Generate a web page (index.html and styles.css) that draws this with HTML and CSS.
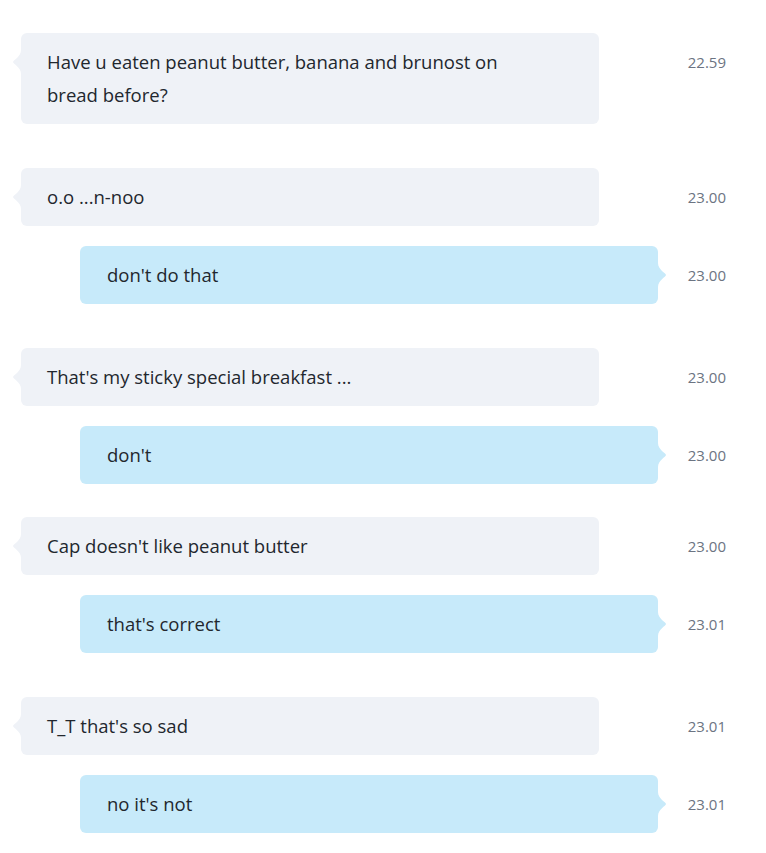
FILE: index.html
```html
<!DOCTYPE html>
<html lang="en">
<head>
    <meta charset="UTF-8">
    <meta name="viewport" content="width=device-width, initial-scale=1.0">
    <title>Chat</title>
    <link rel="stylesheet" href="styles.css">
</head>
<body>
    <div class="chat">
        <div class="row in">
            <div class="bubble">Have u eaten peanut butter, banana and brunost on<br>bread before?</div>
            <div class="time">22.59</div>
        </div>

        <div class="row in gap-big">
            <div class="bubble">o.o ...n-noo</div>
            <div class="time">23.00</div>
        </div>
        <div class="row out">
            <div class="bubble">don't do that</div>
            <div class="time">23.00</div>
        </div>

        <div class="row in gap-big">
            <div class="bubble">That's my sticky special breakfast ...</div>
            <div class="time">23.00</div>
        </div>
        <div class="row out">
            <div class="bubble">don't</div>
            <div class="time">23.00</div>
        </div>

        <div class="row in gap-mid">
            <div class="bubble">Cap doesn't like peanut butter</div>
            <div class="time">23.00</div>
        </div>
        <div class="row out">
            <div class="bubble">that's correct</div>
            <div class="time">23.01</div>
        </div>

        <div class="row in gap-big">
            <div class="bubble">T_T that's so sad</div>
            <div class="time">23.01</div>
        </div>
        <div class="row out">
            <div class="bubble">no it's not</div>
            <div class="time">23.01</div>
        </div>
    </div>
</body>
</html>
```

FILE: styles.css
```css
body { margin: 0; background: #fff; font-family: "Open Sans", "Noto Sans", sans-serif; color: #22272e; }
.chat { padding: 33px 0 20px 21px; display: flex; flex-direction: column; gap: 20px; }
.gap-big { margin-top: 24px; }
.gap-mid { margin-top: 13px; }

.row { display: flex; align-items: flex-start; }
.bubble { position: relative; width: 578px; height: auto; box-sizing: border-box; padding: 12px 26px 13px; font-size: 18.5px; line-height: 33px; border-radius: 6px; }
.time { font-size: 15px; color: #6c7482; line-height: 20px; padding-top: 19px; width: 40px; text-align: right; }

.in .bubble { background: #eff2f7; }
.in .time { margin-left: 87px; }
.in .bubble::before { content: ""; position: absolute; left: -8px; top: 17px; width: 8px; height: 24px; background: #eff2f7;
    clip-path: path("M8 0 C8 7 0 10 0 12 C0 14 8 17 8 24 Z"); }

.out .bubble { background: #c7eafa; margin-left: 59px; padding-left: 27px; }
.out .time { margin-left: 28px; }
.out .bubble::after { content: ""; position: absolute; right: -8px; top: 17px; width: 8px; height: 24px; background: #c7eafa;
    clip-path: path("M0 0 C0 7 8 10 8 12 C8 14 0 17 0 24 Z"); }
```
